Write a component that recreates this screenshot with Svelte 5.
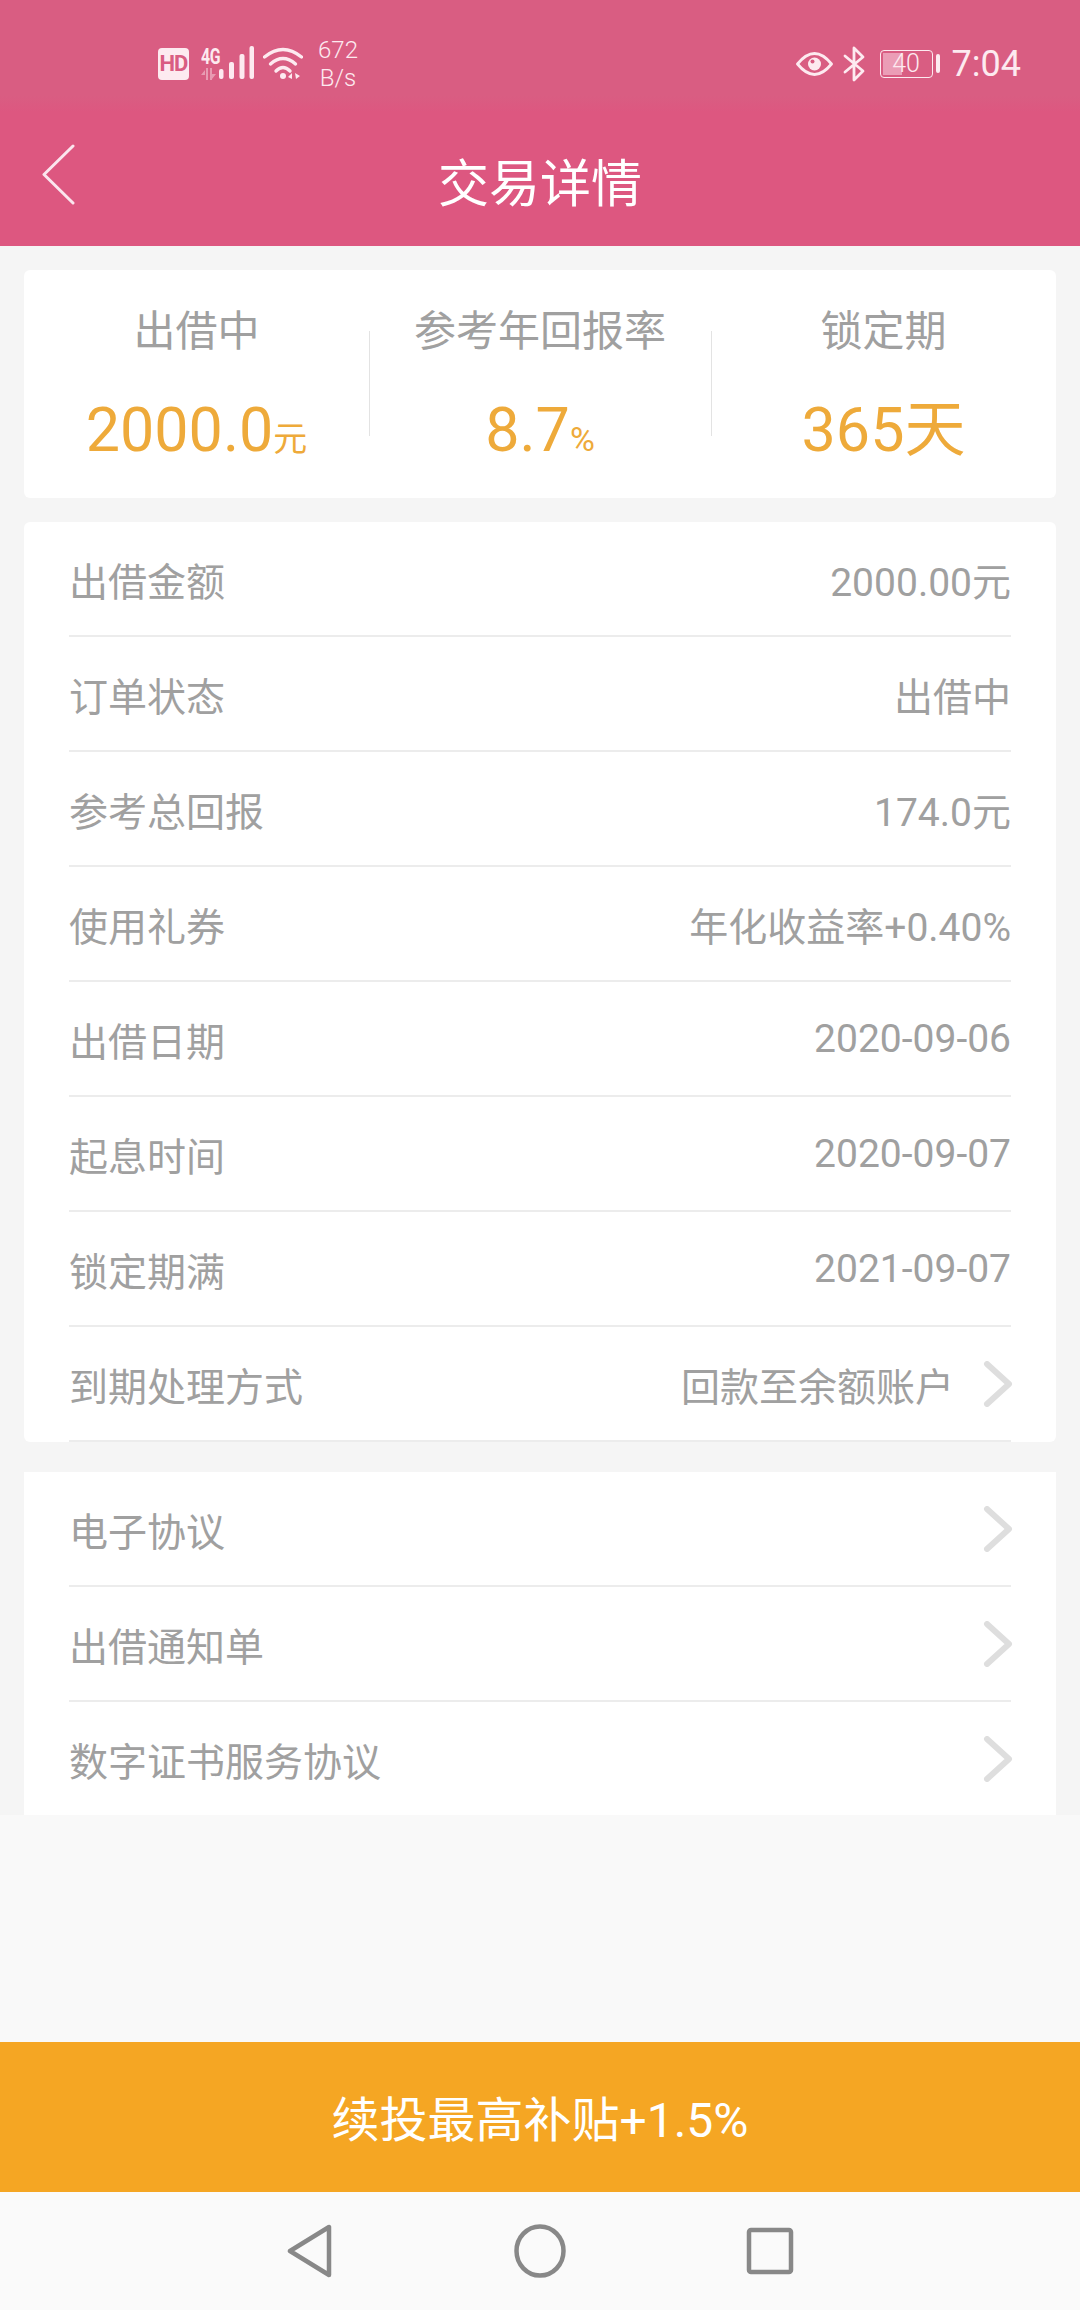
<script lang="ts">
  const stats = [
    { label: '出借中', value: '2000.0', unit: '元', small: true },
    { label: '参考年回报率', value: '8.7', unit: '%', small: true },
    { label: '锁定期', value: '365', unit: '天', small: false }
  ]

  const details = [
    { label: '出借金额', value: '2000.00元' },
    { label: '订单状态', value: '出借中' },
    { label: '参考总回报', value: '174.0元' },
    { label: '使用礼券', value: '年化收益率+0.40%' },
    { label: '出借日期', value: '2020-09-06' },
    { label: '起息时间', value: '2020-09-07' },
    { label: '锁定期满', value: '2021-09-07' },
    { label: '到期处理方式', value: '回款至余额账户', link: true }
  ]

  const links = ['电子协议', '出借通知单', '数字证书服务协议']
</script>

{#snippet chevron()}
  <svg class="chevron" width="30" height="46" viewBox="0 0 30 46" fill="none">
    <path d="M4 3 L26 23 L4 43" stroke="#dedede" stroke-width="6" stroke-linecap="round" stroke-linejoin="round" />
  </svg>
{/snippet}

<div class="page">
  <header>
    <div class="status">
      <div class="status-left">
        <span class="hd">HD</span>
        <div class="net">
          <span class="net-4g">4G</span>
          <svg width="15" height="12" viewBox="0 0 15 12" fill="#fbe6ee" opacity="0.45">
            <path d="M0 7 L4 2 V7 Z M5 0 H7 V12 H5 Z M9 0 H11 V12 H9 Z M11 6 H15 L11 11 Z" />
          </svg>
        </div>
        <svg class="signal" width="35" height="34" viewBox="0 0 35 34" fill="#fdeaf0">
          <rect x="0" y="23" width="4.5" height="10" rx="2" />
          <rect x="10" y="16" width="5" height="17" rx="2" />
          <rect x="20.5" y="8" width="5" height="25" rx="2" />
          <rect x="30.5" y="0" width="4.5" height="33" rx="2" />
        </svg>
        <svg class="wifi" width="40" height="34" viewBox="0 0 40 34" fill="none" stroke="#fdeaf0" stroke-width="3.4" stroke-linecap="round">
          <path d="M1.5 10 Q20 -5 38.5 10" />
          <path d="M7.5 17 Q20 6 32.5 17" />
          <path d="M13 24 Q20 17 27 24" />
          <circle cx="20" cy="29" r="3" fill="#fdeaf0" stroke="none" />
          <path d="M25 30 L29 26 V32 Z M32 26 L37 29 L33 32 Z" fill="#fdeaf0" stroke="none" />
        </svg>
        <div class="speed"><span>672</span><span>B/s</span></div>
      </div>
      <div class="status-right">
        <svg width="37" height="28" viewBox="0 0 37 28" fill="none" stroke="#fdeaf0" stroke-width="2.8">
          <path d="M1.5 14 Q18.5 -7 35.5 14 Q18.5 35 1.5 14 Z" stroke-linejoin="round" />
          <circle cx="18.5" cy="14" r="6.5" fill="#fdeaf0" stroke="none" />
          <circle cx="16.5" cy="11.5" r="2" fill="#d85c82" stroke="none" />
        </svg>
        <svg class="bt" width="22" height="36" viewBox="0 0 22 36" fill="none" stroke="#fdeaf0" stroke-width="2.8" stroke-linejoin="round" stroke-linecap="round">
          <path d="M2 10 L20 25 L11 34 V2 L20 11 L2 26" />
        </svg>
        <div class="battery">
          <span class="battery-fill"></span>
          <span class="battery-text">40</span>
        </div>
        <span class="nub"></span>
        <span class="time">7:04</span>
      </div>
    </div>
    <div class="nav">
      <svg class="back" width="33" height="61" viewBox="0 0 33 61" fill="none">
        <path d="M31 2 L2 30.5 L31 59" stroke="#fbe6ee" stroke-width="3" stroke-linecap="round" stroke-linejoin="round" />
      </svg>
      <h1>交易详情</h1>
    </div>
  </header>

  <main>
    <section class="card stats">
      {#each stats as s}
        <div class="stat">
          <div class="stat-label">{s.label}</div>
          <div class="stat-value">{s.value}<span class:small={s.small}>{s.unit}</span></div>
        </div>
      {/each}
    </section>

    <section class="card details">
      {#each details as row}
        <div class="row">
          <span>{row.label}</span>
          <span class="right">
            {row.value}
            {#if row.link}{@render chevron()}{/if}
          </span>
        </div>
      {/each}
    </section>

    <section class="card links">
      {#each links as link}
        <div class="row">
          <span>{link}</span>
          {@render chevron()}
        </div>
      {/each}
    </section>
  </main>

  <div class="spacer"></div>
  <button class="cta">续投最高补贴+1.5%</button>

  <footer>
    <svg width="46" height="54" viewBox="0 0 46 54" fill="none" stroke="#888" stroke-width="4.5" stroke-linejoin="round">
      <path d="M42 3 V51 L3 27 Z" />
    </svg>
    <svg width="52" height="54" viewBox="0 0 52 54" fill="none" stroke="#888" stroke-width="4.5">
      <ellipse cx="26" cy="27" rx="23.5" ry="24.5" />
    </svg>
    <svg width="48" height="48" viewBox="0 0 48 48" fill="none" stroke="#888" stroke-width="4.5" stroke-linejoin="round">
      <rect x="3" y="3" width="42" height="42" rx="2" />
    </svg>
  </footer>
</div>

<style>
  :global(body) {
    margin: 0;
    background: #f9f9f9;
  }

  .page {
    display: flex;
    flex-direction: column;
    width: 1080px;
    min-height: 2310px;
    font-family: Roboto, "Noto Sans CJK SC", sans-serif;
    color: #a0a0a0;
    background: #f9f9f9;
  }

  header {
    height: 246px;
    background: linear-gradient(#d95d82 0, #d95d82 96px, #dd5780 112px);
  }

  .status {
    display: flex;
    justify-content: space-between;
    align-items: center;
    height: 124px;
    padding: 3px 59px 0 158px;
    box-sizing: border-box;
    color: #fdeaf0;
  }

  .status-left,
  .status-right {
    display: flex;
    align-items: center;
  }

  .hd {
    width: 31px;
    height: 32px;
    border-radius: 4px;
    background: #fdeaf0;
    color: #d95d82;
    font-size: 22px;
    font-weight: 700;
    line-height: 32px;
    text-align: center;
    letter-spacing: -1px;
  }

  .net {
    display: flex;
    flex-direction: column;
    width: 18px;
    margin-left: 12px;
    gap: 2px;
  }

  .net-4g {
    font-size: 22px;
    font-weight: 700;
    line-height: 18px;
    letter-spacing: -0.5px;
    white-space: nowrap;
    transform: scaleX(0.72);
    transform-origin: left;
  }

  .signal {
    margin-top: -1px;
  }

  .wifi {
    margin-left: 9px;
  }

  .speed {
    display: flex;
    flex-direction: column;
    align-items: center;
    margin-left: 15px;
    font-size: 24px;
    line-height: 28px;
    font-weight: 300;
  }

  .bt {
    margin-left: 10px;
  }

  .battery {
    position: relative;
    width: 53px;
    height: 28px;
    margin-left: 15px;
    box-sizing: border-box;
    border: 1.5px solid #fdeaf0;
    border-radius: 4px;
    overflow: hidden;
  }

  .battery-fill {
    position: absolute;
    left: 2px;
    top: 2px;
    bottom: 2px;
    width: 19px;
    background: #eb9db6;
  }

  .battery-text {
    position: absolute;
    inset: 0;
    font-size: 25px;
    font-weight: 300;
    line-height: 25px;
    text-align: center;
  }

  .nub {
    width: 4px;
    height: 19px;
    margin-left: 3px;
    border-radius: 2px;
    background: #fdeaf0;
  }

  .time {
    margin-left: 12px;
    font-size: 36px;
    line-height: 36px;
  }

  .nav {
    position: relative;
    display: flex;
    align-items: center;
    justify-content: center;
    height: 122px;
  }

  .back {
    position: absolute;
    left: 42px;
    top: 20px;
  }

  h1 {
    margin: 0;
    color: #fff;
    font-size: 51px;
    font-weight: 400;
    line-height: 60px;
  }

  main {
    display: flex;
    flex-direction: column;
    padding: 24px 24px 0;
    background: #f5f5f5;
  }

  .card {
    background: #fff;
    border-radius: 6px;
  }

  .stats {
    display: grid;
    grid-template-columns: 345px 342px 345px;
    height: 228px;
    margin-bottom: 24px;
  }

  .stat {
    position: relative;
    display: flex;
    flex-direction: column;
    align-items: center;
    padding-top: 37px;
  }

  .stat + .stat::before {
    content: '';
    position: absolute;
    left: 0;
    top: 61px;
    height: 105px;
    width: 1px;
    background: #e3e3e3;
  }

  .stat-label {
    font-size: 42px;
    line-height: 50px;
  }

  .stat-value {
    margin-top: 38px;
    color: #eeaa3a;
    font-size: 61px;
    line-height: 70px;
    white-space: nowrap;
  }

  .stat-value .small {
    font-size: 34px;
  }

  .details {
    margin-bottom: 30px;
  }

  .row {
    display: flex;
    justify-content: space-between;
    align-items: center;
    height: 113px;
    margin: 0 45px;
    border-bottom: 2px solid #ececec;
    font-size: 39px;
  }

  .right {
    display: flex;
    align-items: center;
  }

  .chevron {
    display: block;
    margin-right: -2px;
  }

  .right .chevron {
    margin-left: 29px;
  }

  .links {
    height: 343px;
    overflow: hidden;
    border-radius: 0;
  }

  .links .row:last-child {
    border-bottom: none;
  }

  .spacer {
    flex: 1;
  }

  .cta {
    display: block;
    width: 100%;
    height: 150px;
    padding: 0 0 3px;
    border: none;
    background: #f5a623;
    color: #fff;
    font-family: inherit;
    font-size: 48px;
  }

  footer {
    display: grid;
    grid-template-columns: 287px 46px 181px 52px 180px 48px;
    align-items: center;
    height: 118px;
    background: #fafafa;
  }

  footer svg:nth-child(1) { grid-column: 2; }
  footer svg:nth-child(2) { grid-column: 4; }
  footer svg:nth-child(3) { grid-column: 6; }
</style>
